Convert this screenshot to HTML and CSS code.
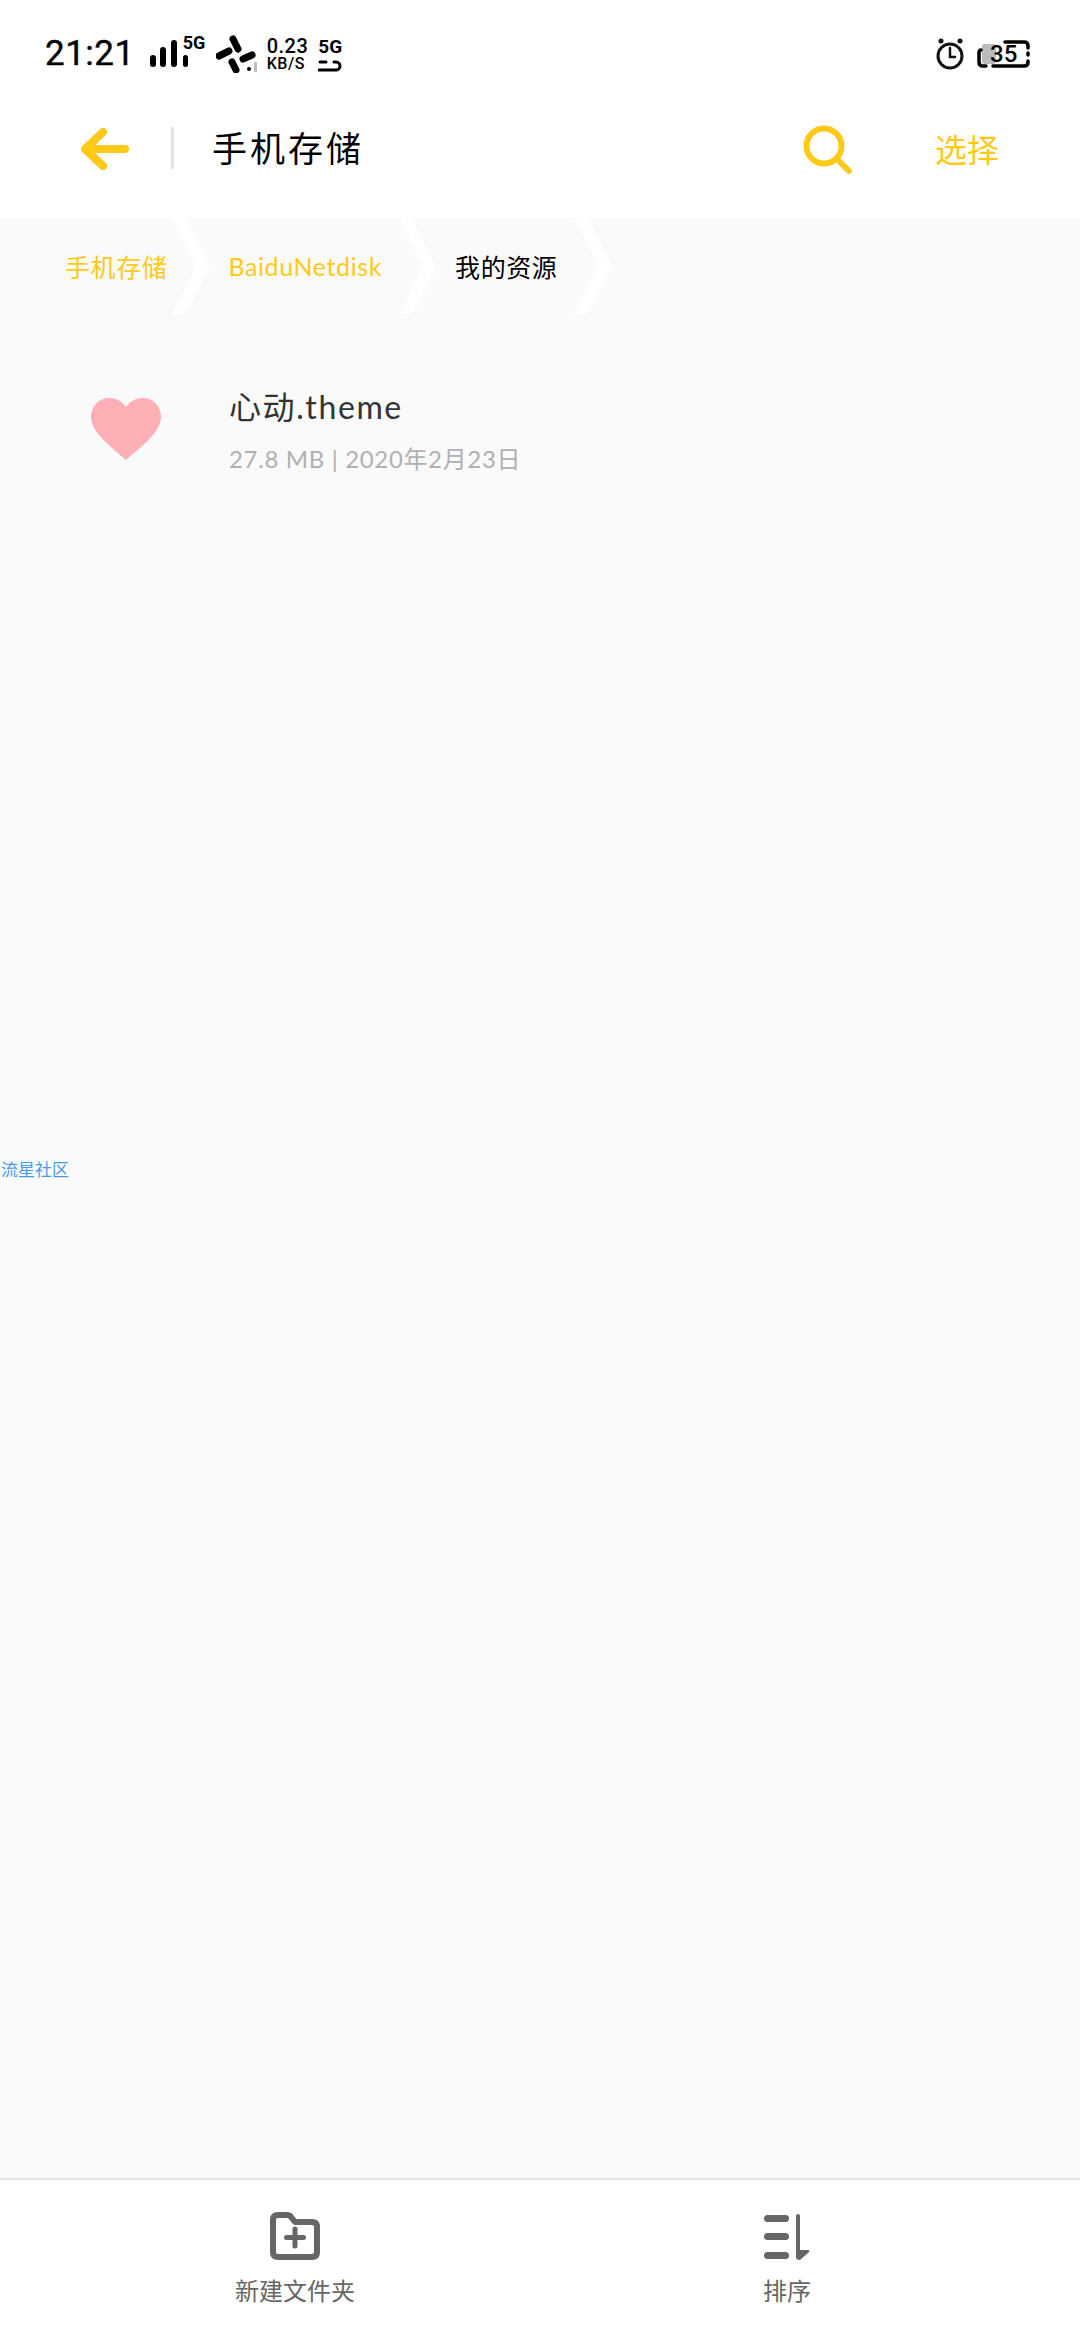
FILE: index.html
```html
<!DOCTYPE html>
<html lang="zh-CN">
<head>
    <meta charset="UTF-8">
    <meta name="viewport" content="width=device-width, initial-scale=1.0">
    <title>手机存储</title>
    <link rel="stylesheet" href="styles.css">
</head>
<body>
    <div class="page">
        <header class="top">
            <!-- Barra de status -->
            <div class="status-bar">
                <div class="status-left">
                    <span class="time">21:21</span>
                    <div class="signal">
                        <svg width="40" height="28" viewBox="0 0 40 28">
                            <rect x="1" y="15" width="6" height="12" rx="3"/>
                            <rect x="11" y="7" width="6" height="20" rx="3"/>
                            <rect x="22" y="0" width="6" height="27" rx="3"/>
                            <rect x="34" y="15" width="5" height="12" rx="2.5"/>
                        </svg>
                        <span class="signal-label">5G</span>
                    </div>
                    <svg class="fan" width="42" height="38" viewBox="0 0 42 38">
                        <g stroke="#000" stroke-width="7" stroke-linecap="round">
                            <line x1="17" y1="4" x2="22" y2="14"/>
                            <line x1="27" y1="24" x2="36" y2="20"/>
                            <line x1="16" y1="27" x2="20" y2="35"/>
                            <line x1="3" y1="21" x2="13" y2="16"/>
                        </g>
                        <circle cx="33" cy="34" r="2"/>
                        <rect x="38" y="27" width="3" height="10" rx="1" fill="#bbb"/>
                    </svg>
                    <div class="speed">
                        <span class="speed-value">0.23</span>
                        <span class="speed-unit">KB/S</span>
                    </div>
                    <div class="sim">
                        <span class="sim-label">5G</span>
                        <svg width="24" height="12" viewBox="0 0 24 12">
                            <path d="M2 2h6M1 10h17a4 4 0 0 0 0-8h-2" fill="none" stroke="#000" stroke-width="3" stroke-linecap="round"/>
                        </svg>
                    </div>
                </div>
                <div class="status-right">
                    <svg width="28" height="32" viewBox="0 0 28 32">
                        <circle cx="14" cy="18" r="12" fill="none" stroke="#111" stroke-width="3"/>
                        <circle cx="5" cy="3" r="2.500" fill="#111"/>
                        <circle cx="24" cy="3" r="2.500" fill="#111"/>
                        <path d="M14 10v9h5" fill="none" stroke="#111" stroke-width="2.500" stroke-linecap="round"/>
                    </svg>
                    <div class="battery">
                        <svg width="53" height="28" viewBox="0 0 53 28">
                            <rect x="5" y="4" width="14" height="20" rx="3" fill="#bbb"/>
                            <path d="M4 10q-2 0-2 3v9q0 4 4 4h3M16 26h31q4 0 4-4v-1M51 15v-2M51 8v-2q0-4-4-4H28" fill="none" stroke="#000" stroke-width="3.500" stroke-linecap="round"/>
                        </svg>
                        <span class="battery-level">35</span>
                    </div>
                </div>
            </div>

            <!-- Barra de titulo -->
            <div class="toolbar">
                <svg class="back" width="48" height="42" viewBox="0 0 48 42">
                    <path d="M44 21H5M22 4 4 21l18 17" fill="none" stroke="#ffc918" stroke-width="8" stroke-linecap="round" stroke-linejoin="round"/>
                </svg>
                <span class="divider"></span>
                <h1 class="title">手机存储</h1>
                <svg class="search" width="50" height="50" viewBox="0 0 50 50">
                    <circle cx="21" cy="21" r="17.500" fill="none" stroke="#ffc918" stroke-width="6"/>
                    <line x1="35" y1="35" x2="46" y2="46" stroke="#ffc918" stroke-width="6" stroke-linecap="round"/>
                </svg>
                <span class="select">选择</span>
            </div>
        </header>

        <main class="content">
            <nav class="crumbs">
                <span class="crumb">手机存储</span>
                <svg class="chevron" width="36" height="96" viewBox="0 0 36 96"><polygon points="0,0 12,0 36,48 12,96 0,96 23,48"/></svg>
                <span class="crumb">BaiduNetdisk</span>
                <svg class="chevron" width="36" height="96" viewBox="0 0 36 96"><polygon points="0,0 12,0 36,48 12,96 0,96 23,48"/></svg>
                <span class="crumb current">我的资源</span>
                <svg class="chevron" width="36" height="96" viewBox="0 0 36 96"><polygon points="0,0 12,0 36,48 12,96 0,96 23,48"/></svg>
            </nav>

            <div class="file-row">
                <svg class="file-icon" width="72" height="64" viewBox="0 0 72 64">
                    <path d="M36 63C24 52 1 36 1 20 1 9 9 1 19 1c7 0 13 3 17 9 4-6 10-9 17-9 10 0 18 8 18 19 0 16-23 32-35 43z" fill="#ffb0b6"/>
                </svg>
                <div class="file-info">
                    <div class="file-name">心动.theme</div>
                    <div class="file-meta">27.8 MB | 2020年2月23日</div>
                </div>
            </div>

            <span class="watermark">流星社区</span>
        </main>

        <footer class="bottom">
            <div class="action">
                <svg width="50" height="48" viewBox="0 0 50 48">
                    <path d="M3 8q0-5 5-5h9q3 0 4 2l4 5h17q5 0 5 5v25q0 5-5 5H8q-5 0-5-5z" fill="none" stroke="#666" stroke-width="6" stroke-linejoin="round"/>
                    <path d="M25 17v17M16.500 25.500h17" fill="none" stroke="#666" stroke-width="5" stroke-linecap="round"/>
                </svg>
                <span>新建文件夹</span>
            </div>
            <div class="action">
                <svg width="46" height="48" viewBox="0 0 46 48">
                    <g fill="#666">
                        <rect x="0" y="3" width="25" height="7" rx="3.500"/>
                        <rect x="0" y="21" width="25" height="7" rx="3.500"/>
                        <rect x="0" y="40" width="25" height="7" rx="3.500"/>
                        <path d="M32 4q0-2 2-2t2 2v34h8q2 0 1 2l-9 8q-4 0-4-3z"/>
                    </g>
                </svg>
                <span>排序</span>
            </div>
        </footer>
    </div>
</body>
</html>
```

FILE: styles.css
```css
body {
    margin: 0;
    font-family: 'Lato', 'Noto Sans CJK SC', sans-serif;
    background: #fff;
}

.page {
    width: 1080px;
    height: 2340px;
    display: flex;
    flex-direction: column;
}

.top {
    height: 218px;
    background: #fff;
}

/* Barra de status */
.status-bar {
    display: flex;
    justify-content: space-between;
    align-items: center;
    height: 72px;
    padding: 36px 50px 0 45px;
    box-sizing: border-box;
    font-family: 'Roboto', sans-serif;
    color: #000;
}

.status-left,
.status-right {
    display: flex;
    align-items: center;
}

.time {
    font-size: 35px;
    font-weight: 400;
    line-height: 36px;
    letter-spacing: 0.5px;
    -webkit-text-stroke: 0.4px #000;
}

.signal {
    display: flex;
    margin-left: 14px;
    position: relative;
}

.signal-label {
    position: absolute;
    left: 34px;
    top: -7px;
    font-size: 18px;
    font-weight: 700;
    line-height: 20px;
}

.fan {
    margin-left: 27px;
}

.speed {
    display: flex;
    flex-direction: column;
    margin-left: 9px;
}

.speed-value {
    font-size: 20px;
    font-weight: 500;
    line-height: 19px;
    letter-spacing: 0.5px;
}

.speed-unit {
    font-size: 16px;
    font-weight: 500;
    line-height: 15px;
    letter-spacing: 0.5px;
}

.sim {
    display: flex;
    flex-direction: column;
    margin-left: 10px;
}

.sim-label {
    font-size: 19px;
    font-weight: 700;
    line-height: 20px;
}

.sim svg {
    margin-top: 3px;
}

.status-right {
    gap: 13px;
}

.battery {
    position: relative;
    display: flex;
}

.battery-level {
    position: absolute;
    left: 13px;
    top: 0;
    font-size: 24px;
    font-weight: 500;
    line-height: 28px;
}

/* Barra de titulo */
.toolbar {
    display: flex;
    align-items: center;
    height: 146px;
    padding: 6px 0 0 81px;
    box-sizing: border-box;
}

.back {
    margin-top: 2px;
    margin-right: 42px;
}

.divider {
    width: 3px;
    height: 42px;
    background: #e3e3e3;
}

.title {
    flex: 1;
    margin: 0 0 3px 38px;
    font-size: 35px;
    font-weight: 400;
    letter-spacing: 3px;
    color: #000;
}

.search {
    margin-top: 3px;
    margin-right: 82px;
}

.select {
    width: 145px;
    font-size: 32px;
    color: #ffc918;
}

.content {
    flex: 1;
    position: relative;
    background: #fafafa;
}

.crumbs {
    display: flex;
    align-items: center;
    height: 96px;
    padding-left: 65px;
}

.crumb {
    font-size: 25px;
    letter-spacing: 0.6px;
    color: #ffc918;
}

.crumb.current {
    color: #000;
}

.chevron {
    fill: #fff;
    margin: 0 19px 0 18px;
}

.chevron:first-of-type {
    margin-left: 6px;
}

.file-row {
    display: flex;
    align-items: center;
    margin-top: 71px;
    padding-left: 90px;
}

.file-icon {
    margin-top: -2px;
}

.file-info {
    margin-left: 67px;
}

.file-name {
    font-size: 32px;
    line-height: 44px;
    letter-spacing: 1.600px;
    color: #333;
}

.file-meta {
    margin-top: 14px;
    font-size: 24px;
    line-height: 32px;
    letter-spacing: 0.650px;
    color: #b0b0b0;
}

.watermark {
    position: absolute;
    left: 1px;
    top: 940px;
    font-size: 17px;
    line-height: 24px;
    color: #4a9ae8;
}

.bottom {
    display: grid;
    grid-template-columns: 1fr 1fr;
    height: 162px;
    padding: 0 47px 0 49px;
    box-sizing: border-box;
    border-top: 2px solid #e3e3e3;
    background: #fff;
}

.action {
    display: flex;
    flex-direction: column;
    align-items: center;
    padding-top: 32px;
    font-size: 24px;
    color: #666;
}

.action span {
    margin-top: 14px;
    line-height: 34px;
}
```
